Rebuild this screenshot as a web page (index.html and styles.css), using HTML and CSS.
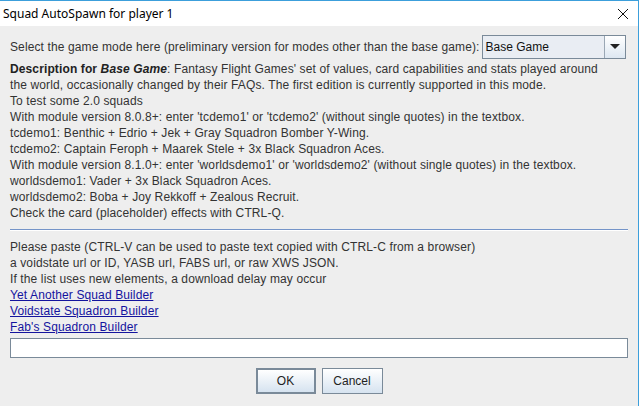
FILE: index.html
```html
<!DOCTYPE html>
<html>
<head>
<meta charset="utf-8">
<link rel="stylesheet" href="styles.css">
</head>
<body>
<div class="window">
  <div class="titlebar">
    <span class="title">Squad AutoSpawn for player 1</span>
    <svg class="close" width="12" height="12" viewBox="0 0 12 12"><path d="M1 1 L11 11 M11 1 L1 11" stroke="#111" stroke-width="1" fill="none"/></svg>
  </div>
  <div class="content">
    <div class="moderow">
      <span class="label">Select the game mode here (preliminary version for modes other than the base game):</span>
      <div class="combo">
        <span class="combo-text">Base Game</span>
        <span class="combo-btn"><svg width="10" height="6" viewBox="0 0 10 6"><path d="M0 0 H10 L5 5 Z" fill="#222"/></svg></span>
      </div>
    </div>
    <div class="text">
      <div class="line"><b>Description for <i>Base Game</i></b>: Fantasy Flight Games' set of values, card capabilities and stats played around</div>
      <div class="line">the world, occasionally changed by their FAQs. The first edition is currently supported in this mode.</div>
      <div class="line">To test some 2.0 squads</div>
      <div class="line">With module version 8.0.8+: enter 'tcdemo1' or 'tcdemo2' (without single quotes) in the textbox.</div>
      <div class="line">tcdemo1: Benthic + Edrio + Jek + Gray Squadron Bomber Y-Wing.</div>
      <div class="line">tcdemo2: Captain Feroph + Maarek Stele + 3x Black Squadron Aces.</div>
      <div class="line">With module version 8.1.0+: enter 'worldsdemo1' or 'worldsdemo2' (without single quotes) in the textbox.</div>
      <div class="line">worldsdemo1: Vader + 3x Black Squadron Aces.</div>
      <div class="line">worldsdemo2: Boba + Joy Rekkoff + Zealous Recruit.</div>
      <div class="line">Check the card (placeholder) effects with CTRL-Q.</div>
    </div>
    <div class="separator"></div>
    <div class="text">
      <div class="line">Please paste (CTRL-V can be used to paste text copied with CTRL-C from a browser)</div>
      <div class="line">a voidstate url or ID, YASB url, FABS url, or raw XWS JSON.</div>
      <div class="line">If the list uses new elements, a download delay may occur</div>
      <div class="line"><a href="#">Yet Another Squad Builder</a></div>
      <div class="line"><a href="#">Voidstate Squadron Builder</a></div>
      <div class="line"><a href="#">Fab's Squadron Builder</a></div>
    </div>
    <div class="field"></div>
    <div class="buttons">
      <button class="btn btn-default">OK</button>
      <button class="btn btn-cancel">Cancel</button>
    </div>
  </div>
</div>
</body>
</html>
```
FILE: styles.css
```css
html, body {
  margin: 0;
  padding: 0;
  background: #eeeeee;
}
.window {
  width: 638px;
  height: 405px;
  border-top: 1px solid #3c9fdb;
  border-right: 1px solid #3c9fdb;
  border-bottom: 1px solid #3c9fdb;
  background: #eeeeee;
  display: flex;
  flex-direction: column;
}
.titlebar {
  height: 25px;
  background: #ffffff;
  display: flex;
  align-items: center;
  justify-content: space-between;
  padding: 0 9px 0 3px;
}
.title {
  font-family: "Noto Sans", "Open Sans", sans-serif;
  font-size: 12px;
  color: #000;
}
.close {
  display: block;
}
.content {
  padding: 9px 10px 0 10px;
  font-family: "Liberation Sans", Arial, sans-serif;
  font-size: 12px;
  letter-spacing: 0.12px;
  color: #333333;
}
.moderow {
  display: flex;
  align-items: center;
  height: 24px;
  margin-bottom: 2px;
}
.label {
  white-space: nowrap;
  margin-right: 2px;
}
.combo {
  width: 144px;
  height: 24px;
  box-sizing: border-box;
  border: 1px solid #7a8a99;
  display: flex;
  background: #e8ecf2;
  letter-spacing: 0;
}
.combo-text {
  flex: 1;
  color: #111;
  padding-left: 3px;
  line-height: 22px;
  background: #e9edf3;
  border-right: 1px solid #9aa7b4;
}
.combo-btn {
  width: 20px;
  display: flex;
  align-items: center;
  justify-content: center;
  background: linear-gradient(#ffffff, #dde7f1);
}
.text .line {
  line-height: 16px;
  height: 16px;
  white-space: nowrap;
}
.text b {
  font-weight: bold;
  color: #222;
}
.separator {
  height: 1px;
  background: #7494c8;
  border-bottom: 1px solid #ffffff;
  margin: 8px 0 8px 0;
}
a {
  color: #14149e;
  text-decoration: underline;
}
.field {
  height: 20px;
  box-sizing: border-box;
  border: 1px solid #7a8a99;
  background: #ffffff;
  margin-top: 3px;
}
.buttons {
  display: flex;
  justify-content: center;
  gap: 6px;
  margin-top: 10px;
}
.btn {
  height: 26px;
  box-sizing: border-box;
  border: 1px solid #7a8a99;
  background: linear-gradient(#ffffff, #d6e3f0);
  font-family: "Liberation Sans", Arial, sans-serif;
  font-size: 12px;
  color: #222;
  padding: 0;
  margin: 0;
}
.btn-default {
  width: 60px;
  border: 2px solid #7a8a99;
}
.btn-cancel {
  width: 61px;
}
```
